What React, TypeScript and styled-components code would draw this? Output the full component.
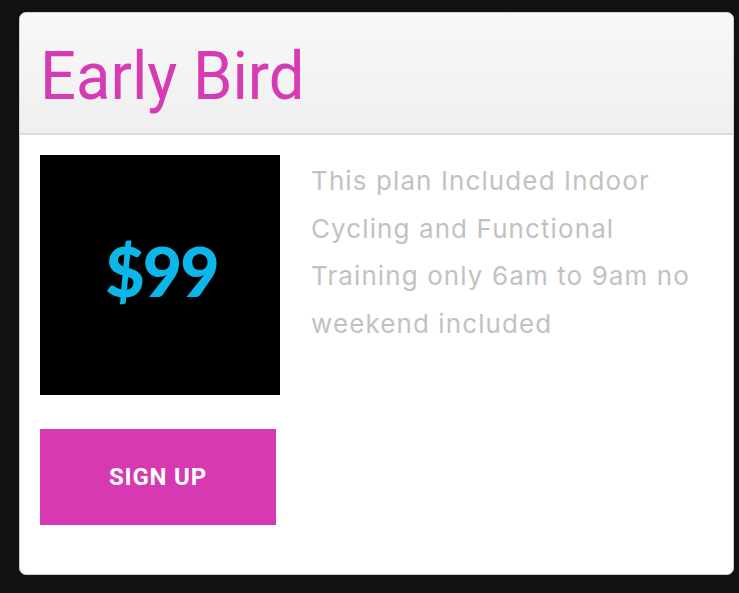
import React from "react";
import styled, { createGlobalStyle } from "styled-components";

const GlobalStyle = createGlobalStyle`
  html, body {
    margin: 0;
    padding: 0;
    background: #111111;
  }
  body {
    font-family: "Liberation Sans", Arial, sans-serif;
  }
`;

const Page = styled.div`
  min-height: 593px;
  box-sizing: border-box;
  padding: 12px 5px 0 19px;
  background: #111111;
`;

const Card = styled.section`
  background: #ffffff;
  border: 1px solid #cfcfd2;
  border-radius: 7px;
  overflow: hidden;
`;

const Header = styled.header`
  height: 122px;
  box-sizing: border-box;
  padding: 0 20px;
  display: flex;
  align-items: center;
  background: linear-gradient(to bottom, #f8f8f8 0%, #efefef 100%);
  border-bottom: 2px solid #dcdcde;
`;

const Title = styled.h1`
  margin: 0;
  padding-top: 6px;
  font-family: Roboto, "Liberation Sans", sans-serif;
  font-weight: 400;
  font-size: 67px;
  line-height: 1;
  color: #d63bb4;
  transform-origin: left center;
  transform: scaleX(0.945);
`;

const Body = styled.div`
  display: grid;
  grid-template-columns: 240px 1fr;
  column-gap: 31px;
  padding: 20px 20px 49px 20px;
`;

const LeftColumn = styled.div`
  display: flex;
  flex-direction: column;
  gap: 34px;
`;

const PriceTile = styled.div`
  width: 240px;
  height: 240px;
  background: #000000;
  display: flex;
  align-items: center;
  justify-content: center;
  padding-bottom: 8px;
  box-sizing: border-box;
`;

const Price = styled.span`
  font-family: Lato, "Liberation Sans", sans-serif;
  font-weight: 900;
  font-size: 68px;
  letter-spacing: -2px;
  color: #0bb6e8;
  line-height: 1;
  padding-left: 3px;
`;

const SignUp = styled.button`
  width: 236px;
  height: 96px;
  border: none;
  border-radius: 0;
  background: #d739b2;
  color: #ffffff;
  font-family: Roboto, "Liberation Sans", sans-serif;
  font-weight: 700;
  font-size: 24px;
  letter-spacing: 0.8px;
  text-transform: uppercase;
  cursor: pointer;
  padding: 0;
`;

const Description = styled.p`
  margin: 0;
  padding-top: 2px;
  font-family: Inter, "Liberation Sans", sans-serif;
  font-size: 26px;
  line-height: 47.5px;
  letter-spacing: 1.1px;
  color: #c2c2c2;
`;

export default function App() {
  return (
    <>
      <GlobalStyle />
      <Page>
        <Card>
          <Header>
            <Title>Early Bird</Title>
          </Header>
          <Body>
            <LeftColumn>
              <PriceTile>
                <Price>$99</Price>
              </PriceTile>
              <SignUp>Sign up</SignUp>
            </LeftColumn>
            <Description>
              This plan Included Indoor Cycling and Functional Training only 6am
              to 9am no weekend included
            </Description>
          </Body>
        </Card>
      </Page>
    </>
  );
}
